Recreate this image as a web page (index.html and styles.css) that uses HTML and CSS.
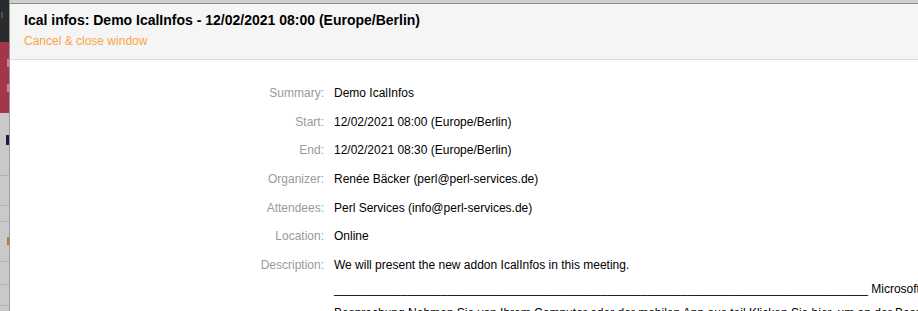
FILE: index.html
```html
<!DOCTYPE html>
<html>
<head>
<meta charset="utf-8">
<link rel="stylesheet" href="styles.css">
</head>
<body>
<div class="page">
  <div class="backdrop">
    <div class="bd-dark"><div class="bd-dot"></div></div>
    <div class="bd-red">
      <div class="bd-mark m1"></div>
      <div class="bd-mark m2"></div>
    </div>
    <div class="bd-grey">
      <div class="bd-glyph"></div>
      <div class="bd-line l1"></div>
      <div class="bd-line l2"></div>
      <div class="bd-line l3"></div>
      <div class="bd-or"></div>
      <div class="bd-line l4"></div>
      <div class="bd-line l5"></div>
      <div class="bd-line l6"></div>
    </div>
  </div>
  <div class="dialog">
    <div class="frame-top"></div>
    <div class="header">
      <h1 class="title">Ical infos: Demo IcalInfos - 12/02/2021 08:00 (Europe/Berlin)</h1>
      <a class="cancel" href="#">Cancel &amp; close window</a>
    </div>
    <div class="content">
      <div class="info">
        <div class="label">Summary:</div><div class="value">Demo IcalInfos</div>
        <div class="label">Start:</div><div class="value">12/02/2021 08:00 (Europe/Berlin)</div>
        <div class="label">End:</div><div class="value">12/02/2021 08:30 (Europe/Berlin)</div>
        <div class="label">Organizer:</div><div class="value">Renée Bäcker (perl@perl-services.de)</div>
        <div class="label">Attendees:</div><div class="value">Perl Services (info@perl-services.de)</div>
        <div class="label">Location:</div><div class="value">Online</div>
        <div class="label">Description:</div>
        <div class="value desc">
          <div class="dline">We will present the new addon IcalInfos in this meeting.</div>
          <div class="dline">________________________________________________________________________________ Microsoft Teams-Besprechung</div>
          <div class="dline">Besprechung Nehmen Sie von Ihrem Computer oder der mobilen App aus teil Klicken Sie hier, um an der Besprechung teilzunehmen</div>
        </div>
      </div>
    </div>
  </div>
</div>
</body>
</html>
```
FILE: styles.css
```css
html, body {
  margin: 0;
  padding: 0;
  height: 100%;
  overflow: hidden;
  background: #fff;
}
.page {
  display: flex;
  height: 311px;
  font-family: "Liberation Sans", Arial, sans-serif;
}
.backdrop {
  width: 9px;
  flex: none;
  display: flex;
  flex-direction: column;
  border-right: 1px solid #9c9c9c;
  overflow: hidden;
}
.bd-dark {
  height: 42px;
  flex: none;
  background: #2a2b2d;
  position: relative;
}
.bd-dot {
  position: absolute;
  left: 1px;
  top: 12px;
  width: 2px;
  height: 6px;
  background: #3b5570;
}
.bd-red {
  height: 71px;
  flex: none;
  background: #a4354b;
  position: relative;
}
.bd-mark {
  position: absolute;
  right: 0;
  width: 2px;
  background: #c98796;
}
.m1 { top: 17px; height: 8px; }
.m2 { top: 42px; height: 8px; }
.bd-grey {
  flex: 1;
  background: #c9c9c9;
  position: relative;
}
.bd-glyph {
  position: absolute;
  top: 22px;
  right: 0;
  width: 3px;
  height: 10px;
  background: #16203a;
}
.bd-or {
  position: absolute;
  top: 124px;
  right: 0;
  width: 2px;
  height: 8px;
  background: #b07a3c;
}
.bd-line {
  position: absolute;
  left: 0;
  right: 0;
  height: 1px;
  background: #b3b3b3;
}
.l1 { top: 62px; }
.l2 { top: 92px; }
.l3 { top: 108px; }
.l4 { top: 148px; }
.l5 { top: 171px; }
.l6 { top: 192px; }
.dialog {
  flex: 1;
  min-width: 0;
  display: flex;
  flex-direction: column;
  overflow: hidden;
}
.frame-top {
  flex: none;
  height: 3px;
  background: #cfcfcf;
  border-bottom: 1px solid #8a8a8a;
}
.header {
  flex: none;
  background: #f5f5f5;
  border-bottom: 1px solid #dcdcdc;
  height: 56px;
  box-sizing: border-box;
  padding: 8px 14px 0;
}
.title {
  margin: 0;
  font-size: 14px;
  font-weight: bold;
  color: #000;
  line-height: 17px;
}
.cancel {
  display: block;
  margin-top: 5px;
  font-size: 12px;
  line-height: 15px;
  color: #fba444;
  text-decoration: none;
}
.content {
  flex: none;
  padding-top: 19px;
}
.info {
  display: grid;
  grid-template-columns: 314px max-content;
  column-gap: 10px;
  font-size: 12px;
  line-height: 16.67px;
}
.label {
  text-align: right;
  color: #9a9a9a;
  padding: 6px 0;
  white-space: nowrap;
}
.value {
  color: #000;
  padding: 6px 0;
  white-space: nowrap;
}
.desc {
  padding-top: 6px;
}
.dline {
  line-height: 16.67px;
  margin-bottom: 7.5px;
}
```
